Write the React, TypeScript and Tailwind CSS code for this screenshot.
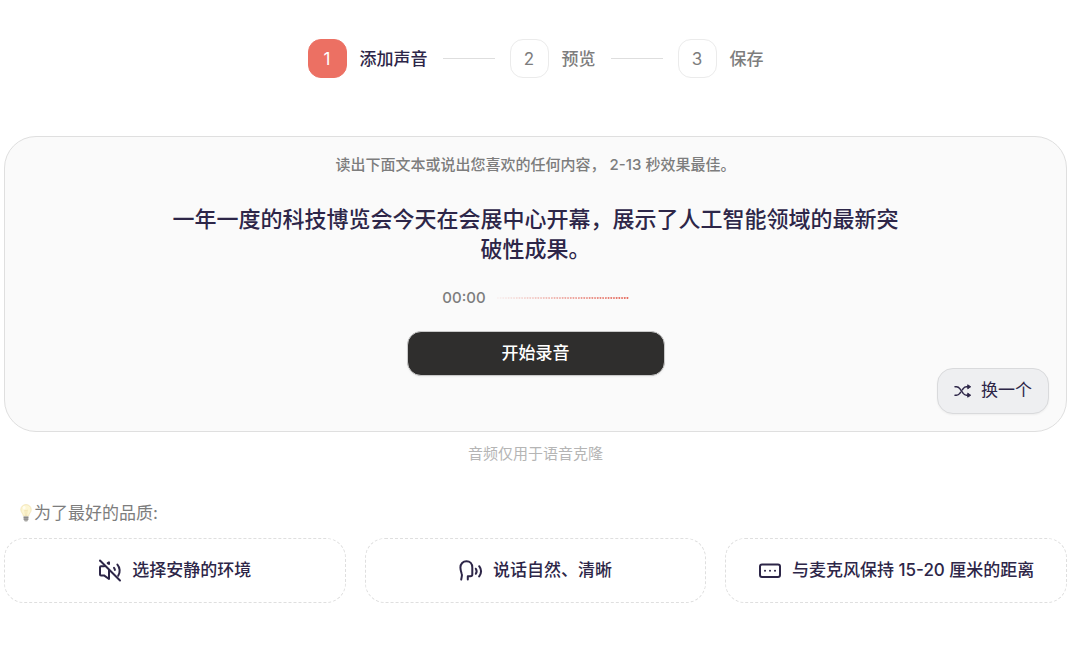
import React from "react";

const steps = ["添加声音", "预览", "保存"];

const BAR_COUNT = 49;

function Stepper() {
  return (
    <ol className="flex items-center justify-center">
      {steps.map((label, i) => (
        <li
          key={label}
          aria-current={i === 0 ? "step" : undefined}
          className={`flex items-center text-[17px] leading-6 font-medium ${i === 0 ? "text-[#2d2648]" : "text-[#7d7d7d]"}`}
        >
          {i > 0 && <span className="mx-[15px] h-px w-[52px] bg-[#dedede]" />}
          <span
            className={`mr-[13px] flex size-[39px] items-center justify-center rounded-[13px] border font-normal ${
              i === 0 ? "border-[#ec7063] bg-[#ec7063] text-white" : "border-[#ebebeb] bg-white"
            }`}
          >
            {i + 1}
          </span>
          {label}
        </li>
      ))}
    </ol>
  );
}

function Waveform() {
  return (
    <svg width="132" height="4" viewBox="0 0 132 4" aria-hidden="true">
      {Array.from({ length: BAR_COUNT }, (_, i) => (
        <rect
          key={i}
          x={i * 2.7}
          y="1"
          width="1.7"
          height="2"
          rx="0.4"
          fill="#e56a5d"
          opacity={0.06 + (i / BAR_COUNT) * 0.94}
        />
      ))}
    </svg>
  );
}

function ShuffleIcon() {
  return (
    <svg width="18" height="14" viewBox="0 0 18 14" fill="none" stroke="currentColor" strokeWidth="1.5" strokeLinecap="round" aria-hidden="true">
      <path d="M1 2.8h1.4c1.5 0 2.5.6 3.4 1.8l3.4 4.8c.9 1.2 1.9 1.8 3.4 1.8H14" />
      <path d="M1 11.2h1.4c1.5 0 2.5-.6 3.4-1.8l.8-1.1M8.4 5.7l.8-1.1c.9-1.2 1.9-1.8 3.4-1.8H14" />
      <path d="M14 1l2.7 1.8L14 4.6zM14 9.4l2.7 1.8-2.7 1.8z" fill="currentColor" strokeWidth="1" strokeLinejoin="round" />
    </svg>
  );
}

function BulbIcon() {
  return (
    <svg width="12" height="18" viewBox="0 0 12 18" aria-hidden="true">
      <path d="M6 .6C3 .6.8 2.8.8 5.6c0 2.6 2.2 3.8 2.6 6.5h5.2c.4-2.7 2.6-3.9 2.6-6.5C11.2 2.8 9 .6 6 .6z" fill="#fdf6d3" stroke="#efe0ae" strokeWidth=".7" />
      <path d="M4 5.8l1.2 1.1.8-1 .8 1L8 5.8M5 7l.4 5M7 7l-.4 5" fill="none" stroke="#eddba6" strokeWidth=".6" />
      <ellipse cx="4.2" cy="3.8" rx="1.4" ry="1.8" fill="#fffdf0" />
      <path d="M3.6 12.2h4.8v3.3l-1.2 1.9H4.8l-1.2-1.9z" fill="#aaa9a6" />
      <path d="M3.6 13.5h4.8M3.8 15.2h4.4" stroke="#777" strokeWidth=".6" />
    </svg>
  );
}

function QuietIcon() {
  return (
    <svg width="24" height="24" viewBox="0 0 24 24" fill="none" stroke="currentColor" strokeWidth="2" strokeLinecap="round" strokeLinejoin="round" aria-hidden="true">
      <path d="M2 1.500l20 20" />
      <path d="M6.200 7.200H3a1 1 0 0 0-1 1v7.200a1 1 0 0 0 1 1h3l5 3.600V11" />
      <path d="M9.700 4.200l1.300-.8v1.600" />
      <path d="M16 8.800c.5.600.8 1.300.9 2.100" />
      <path d="M19.400 5.600c2.700 3 3 7.800.8 11.200" />
    </svg>
  );
}

function SpeakIcon() {
  return (
    <svg width="24" height="24" viewBox="0 0 24 24" fill="none" stroke="currentColor" strokeWidth="2" strokeLinecap="round" strokeLinejoin="round" aria-hidden="true">
      <path d="M2.2 20.600c.1-2 1.200-3.800.6-5.600C2.200 13 1.400 11 1.400 8.600 1.400 4.800 4 2.300 7.500 2.300s5.800 2.600 5.800 6.200v7c0 1.200-.7 1.800-1.900 1.800H8.800v3.300" />
      <path d="M16.800 9.700c1 1.500 1 3.600 0 5.100" />
      <path d="M20.200 7.200c2.200 3 2.200 7.200 0 10.200" />
    </svg>
  );
}

function DistanceIcon() {
  return (
    <svg width="24" height="24" viewBox="0 0 24 24" fill="none" stroke="currentColor" strokeWidth="2" strokeLinecap="round" aria-hidden="true">
      <rect x="2" y="5.500" width="20" height="12.500" rx="2" />
      <path d="M7 11.800h.01M12 11.800h.01M17 11.800h.01" />
    </svg>
  );
}

const tips = [
  { icon: QuietIcon, text: "选择安静的环境" },
  { icon: SpeakIcon, text: "说话自然、清晰" },
  { icon: DistanceIcon, text: "与麦克风保持 15-20 厘米的距离" },
];

export default function App() {
  return (
    <main
      lang="zh-CN"
      className="bg-white pt-[39px] pr-[13px] pb-11 pl-1 font-[Inter,'Noto_Sans_CJK_SC',sans-serif] text-[#2d2648]"
    >
      <Stepper />

      <section className="mt-[58px] flex flex-col items-center rounded-[32px] border border-[#dfdfdf] bg-[#fafafa] px-[17px] pt-4 pb-[17px]">
        <p className="text-[15px] leading-6 font-medium text-[#7d7d7d]">
          读出下面文本或说出您喜欢的任何内容， 2-13 秒效果最佳。
        </p>
        <h1 className="mt-[27px] max-w-[740px] text-center text-[22px] leading-[30px] font-medium">
          一年一度的科技博览会今天在会展中心开幕，展示了人工智能领域的最新突破性成果。
        </h1>
        <div className="mt-[22px] flex items-center gap-[11px] text-[15px] leading-6 font-medium text-[#7d7d7d]">
          <time>00:00</time>
          <Waveform />
        </div>
        <button
          type="button"
          className="mt-[21px] h-[45px] w-[258px] rounded-[14px] border border-[#c9c9c9] bg-[#2f2e2d] text-[17px] font-medium text-white shadow-xs"
        >
          开始录音
        </button>
        <button
          type="button"
          className="-mt-2 flex h-[46px] items-center gap-[9px] self-end rounded-2xl border border-[#d9dadc] bg-[#eeeff1] px-4 text-[17px] shadow-xs"
        >
          <ShuffleIcon />
          换一个
        </button>
      </section>

      <p className="mt-[10px] text-center text-[15px] leading-6 text-[#b5b5b5]">音频仅用于语音克隆</p>

      <section className="mt-[35px]">
        <h2 className="flex items-center gap-[2px] pl-4 text-[17px] leading-6 text-[#7d7d7d]">
          <BulbIcon />
          为了最好的品质:
        </h2>
        <ul className="mt-[13px] grid grid-cols-3 gap-[19px]">
          {tips.map(({ icon: Icon, text }) => (
            <li
              key={text}
              className="flex h-[65px] items-center justify-center gap-[10px] rounded-[20px] border border-dashed border-[#dfdfdf] text-[17px] font-medium"
            >
              <Icon />
              {text}
            </li>
          ))}
        </ul>
      </section>
    </main>
  );
}
